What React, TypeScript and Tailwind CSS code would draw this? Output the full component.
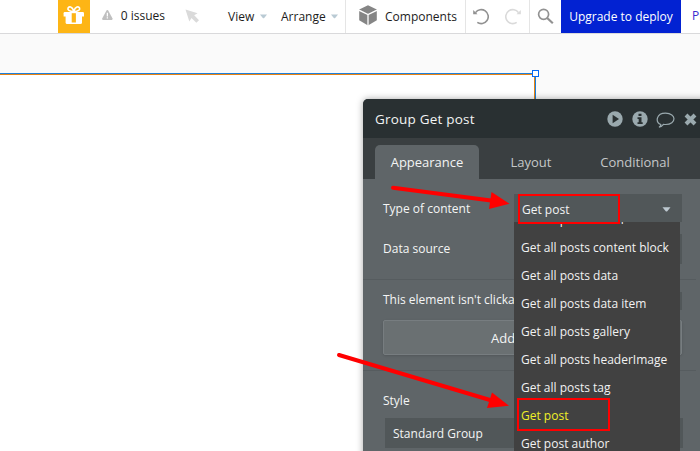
import React from "react";

const menuItems = [
  "Get all posts email",
  "Get all posts content block",
  "Get all posts data",
  "Get all posts data item",
  "Get all posts gallery",
  "Get all posts headerImage",
  "Get all posts tag",
  "Get post",
  "Get post author",
];

function Caret({ className }: { className: string }) {
  return (
    <svg className={className} width="9" height="5" viewBox="0 0 8 5" fill="currentColor">
      <path d="M0 0.3H8L4.8 4.2Q4 5 3.2 4.2Z" />
    </svg>
  );
}

function TopBar() {
  return (
    <header className="relative z-10 flex h-[34px] shrink-0 items-stretch overflow-hidden whitespace-nowrap border-b border-[#d9d9db] bg-white pl-[58px] text-[12px] text-[#1c1c1c]">
      <div className="flex w-8 shrink-0 items-center justify-center bg-[#fdb515]">
        <svg width="22" height="20" viewBox="0 0 22 20" className="mt-[-3px]">
          <path d="M10.800 6.500C6 6.500 4.500 4.800 5 3.200C6 1 9.200 1.500 10.800 6C12.400 1.500 15.600 1 16.600 3.200C17.100 4.800 15.600 6.500 10.800 6.500Z" fill="none" stroke="#fff" strokeWidth="1.600" />
          <path d="M1.800 7H19.800Q21 7 21 8.200V11.500H.600V8.200Q.600 7 1.800 7Z" fill="#fff" />
          <path d="M2.600 11H19V17.500Q19 19 17.500 19H4.100Q2.600 19 2.600 17.500Z" fill="#fff" />
          <path d="M8.700 8.200H12.900V17.500H8.700Z" fill="#fdb515" />
        </svg>
      </div>
      <div className="flex w-[110px] shrink-0 items-center pl-3">
        <svg width="12" height="12" viewBox="0 0 12 12" className="mt-[-3px]">
          <path d="M5.200.8Q6 0 6.800.8L11.800 10Q12 11.500 11 11.500H1Q0 11.500.2 10Z" fill="#c0c0c0" />
          <path d="M5.300 3.500H6.700V7.600H5.300ZM5.300 8.600H6.700V10H5.300Z" fill="#fff" />
        </svg>
        <span className="ml-[8px] mt-[-2px]">0 issues</span>
        <svg width="15" height="15" viewBox="0 0 15 15" className="ml-[20px] shrink-0" fill="#dadada">
          <path d="M.5.500L12.600 4.200L9.200 6.300L14 11.200L11.300 13.800L6.500 9L4.300 12.600Z" />
        </svg>
      </div>
      <div className="flex w-[145px] shrink-0 items-center pl-[28px]">
        <span className="w-[26px]">View</span>
        <Caret className="ml-[6px] w-[7px] text-[#b9cad4]" />
        <span className="ml-[14px] w-[45px]">Arrange</span>
        <Caret className="ml-[5px] w-[7px] text-[#b9cad4]" />
      </div>
      <div className="flex w-[120px] shrink-0 items-center border-l border-[#e5e5e5] pl-[13px]">
        <svg width="18" height="21" viewBox="0 0 18 21" className="mt-[-2px] shrink-0">
          <path d="M9 .3L17.800 4.500V15.300L9 20.500L.2 15.300V4.500Z" fill="#858585" />
          <path d="M0 5.200L9 9.600L18 5.200M9 9.600V21" fill="none" stroke="#fff" strokeWidth="1.300" />
        </svg>
        <span className="ml-[8px]">Components</span>
      </div>
      <div className="flex w-[65px] shrink-0 items-center justify-between border-l border-r border-l-[#e5e5e5] border-r-[#e5e5e5] pl-[7px] pr-[8px]">
        <svg width="16" height="17" viewBox="0 0 16 17" fill="none" stroke="#919191">
          <path d="M2.500 4.600A7 7 0 1 1 4.300 14.400" strokeWidth="1.600" />
          <path d="M.2 2V6.200H4.500Z" fill="#919191" stroke="none" />
        </svg>
        <svg width="16" height="17" viewBox="0 0 16 17" fill="none" stroke="#dadada">
          <path d="M13.500 4.600A7 7 0 1 0 11.700 14.400" strokeWidth="1.600" />
          <path d="M15.800 2V6.200H11.500Z" fill="#dadada" stroke="none" />
        </svg>
      </div>
      <div className="flex w-[31px] shrink-0 items-center justify-center">
        <svg width="17" height="17" viewBox="0 0 17 17" fill="none" stroke="#929292">
          <circle cx="6.600" cy="6.300" r="5" strokeWidth="1.700" />
          <path d="M10.200 10L15.800 15.300" strokeWidth="2.200" />
        </svg>
      </div>
      <button className="w-[120px] shrink-0 bg-[#0222d2] text-center text-white">Upgrade to deploy</button>
      <span className="ml-[11px] mt-[8px] text-[#3a2bcf]">Preview</span>
    </header>
  );
}

function PanelHeader() {
  return (
    <div className="flex h-[39px] items-center rounded-tl-[5px] bg-[#293032] pl-3 text-[#f2f4f4]">
      <span className="w-[232px] text-[13.5px] tracking-[0.2px]">Group Get post</span>
      <div className="flex items-center text-[#9aa9ae]">
        <svg width="16" height="16" viewBox="0 0 16 16" className="mt-[1px]">
          <circle cx="8" cy="8" r="7.700" fill="currentColor" />
          <path d="M5.600 3.800L12 8L5.600 12.200Z" fill="#293032" />
        </svg>
        <svg width="16" height="16" viewBox="0 0 16 16" className="ml-[9px] mt-[1px]">
          <circle cx="8" cy="8" r="7.700" fill="currentColor" />
          <path d="M6.500 2.800H9.500V5H6.500ZM5.500 6.300H9.500V11.300H10.700V13H5.500V11.300H6.700V8H5.500Z" fill="#293032" />
        </svg>
        <svg width="19" height="17" viewBox="0 0 19 17" className="ml-2 mt-[4px]" fill="none" stroke="currentColor" strokeWidth="1.200">
          <path d="M4.800 12.500C-1 10 .2 1.200 9.500 1.200C20.800 1.200 20.800 12.500 9.500 12.500Q8.500 12.500 7.500 12.300Q5.500 14.800 3 15.200Q4.800 14 4.800 12.500Z" />
        </svg>
        <svg width="13" height="13" viewBox="0 0 13 13" className="ml-[9px] mt-[2px]" stroke="currentColor" strokeWidth="4">
          <path d="M2 2L11 11M11 2L2 11" />
        </svg>
      </div>
    </div>
  );
}

function TypeDropdown() {
  return (
    <div className="relative ml-auto h-7 w-[168px]">
      <div className="flex h-7 items-center justify-between bg-[#515759] pl-2 pr-[11px] text-[#f3f4f4]">
        <span className="mt-[3px]">Get post</span>
        <Caret className="mt-[2px] text-[#bdc8d0]" />
      </div>
      <div className="absolute left-0 top-7 z-20 h-[230px] w-[166px] overflow-hidden bg-[#414141] pl-[7px] text-[#f2f2f2]">
        <ul className="mt-[-16px]">
          {menuItems.map((item) => (
            <li
              key={item}
              className={item === "Get post" ? "h-7 whitespace-nowrap leading-7 text-[#f0f028]" : "h-7 whitespace-nowrap leading-7"}
            >
              {item}
            </li>
          ))}
        </ul>
      </div>
    </div>
  );
}

function PropertyPanel() {
  return (
    <section className="absolute left-[363px] top-[99px] z-20 flex h-[360px] w-[345px] flex-col rounded-tl-[5px] bg-[#5f6568] text-[12px] text-[#f4f5f5] shadow-[0_0_7px_rgba(0,0,0,0.35)]">
      <PanelHeader />
      <nav className="flex h-[41px] shrink-0 items-end bg-[#3a3f41] pl-3 text-[13px] text-[#c5c8c9]">
        <div className="flex h-[34px] w-[104px] items-center justify-center rounded-t-[5px] bg-[#5f6568] text-[#f3f4f4]">Appearance</div>
        <div className="flex h-[34px] w-[104px] items-center justify-center">Layout</div>
        <div className="flex h-[34px] w-[104px] items-center justify-center">Conditional</div>
      </nav>
      <div className="flex w-[319px] flex-col pl-5 pt-[15px]">
        <div className="flex h-10 items-start">
          <span className="mt-[7px]">Type of content</span>
          <TypeDropdown />
        </div>
        <div className="flex h-[45px] items-start justify-between">
          <span className="mt-[7px]">Data source</span>
          <div className="h-[30px] w-[168px] bg-[#515759]" />
        </div>
        <div className="-ml-5 w-[333px] border-t border-[#565c5f]" />
        <div className="flex h-[40px] items-start justify-between pt-3">
          <span className="whitespace-nowrap">This element isn't clickable</span>
          <div className="h-[18px] w-12 bg-[#515759]" />
        </div>
        <button className="h-[35px] shrink-0 rounded-[2px] border border-[#777d80] bg-[#6a7072] text-center text-[13px] shadow-sm">Add workflow</button>
        <div className="-ml-5 mt-[15px] w-[333px] border-t border-[#565c5f]" />
        <span className="mt-[22px]">Style</span>
        <div className="ml-[2px] mt-[9px] flex h-[30px] w-[298px] shrink-0 items-center bg-[#515759] pl-2 pt-[2px]">Standard Group</div>
      </div>
    </section>
  );
}

function Annotations() {
  return (
    <svg className="pointer-events-none absolute inset-0 z-30" width="700" height="451" viewBox="0 0 700 451" fill="none" stroke="#ff0000">
      <rect x="519" y="195" width="100" height="28" strokeWidth="2" />
      <rect x="518" y="399" width="91" height="31" strokeWidth="2" />
      <path d="M393 187.700L491 200.500" strokeWidth="4" strokeLinecap="round" />
      <path d="M491.500 192L509.500 203.800L489 209Z" fill="#ff0000" stroke="none" />
      <path d="M339 355L490 400" strokeWidth="4" strokeLinecap="round" />
      <path d="M492 392.500L509 405.800L487 408Z" fill="#ff0000" stroke="none" />
    </svg>
  );
}

export default function App() {
  return (
    <main className="relative flex h-[451px] w-[700px] flex-col overflow-hidden bg-[#fafafa] font-['Open_Sans','Noto_Sans',sans-serif] leading-4">
      <TopBar />
      <div className="relative mt-[39px] h-[378px] w-[536px] border-r border-t border-[#1d80dc]">
        <div className="h-full border-r border-t border-[#e78313] bg-white" />
        <i className="absolute -right-[4px] -top-[4px] h-[7px] w-[7px] border border-[#0869f5] bg-white" />
      </div>
      <PropertyPanel />
      <Annotations />
    </main>
  );
}
